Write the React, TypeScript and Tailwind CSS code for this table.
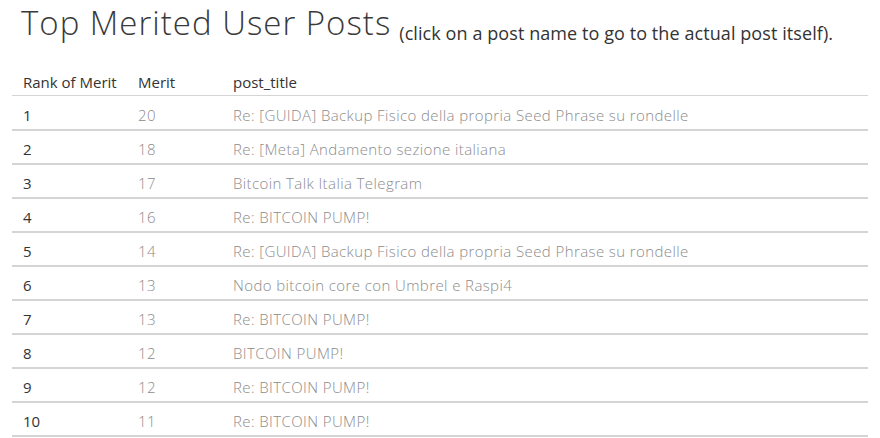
const rows = [
  { rank: 1, merit: 20, title: "Re: [GUIDA] Backup Fisico della propria Seed Phrase su rondelle" },
  { rank: 2, merit: 18, title: "Re: [Meta] Andamento sezione italiana" },
  { rank: 3, merit: 17, title: "Bitcoin Talk Italia Telegram" },
  { rank: 4, merit: 16, title: "Re: BITCOIN PUMP!" },
  { rank: 5, merit: 14, title: "Re: [GUIDA] Backup Fisico della propria Seed Phrase su rondelle" },
  { rank: 6, merit: 13, title: "Nodo bitcoin core con Umbrel e Raspi4" },
  { rank: 7, merit: 13, title: "Re: BITCOIN PUMP!" },
  { rank: 8, merit: 12, title: "BITCOIN PUMP!" },
  { rank: 9, merit: 12, title: "Re: BITCOIN PUMP!" },
  { rank: 10, merit: 11, title: "Re: BITCOIN PUMP!" },
];

export default function App() {
  return (
    <main className="h-[438px] w-[880px] bg-white font-['Open_Sans',sans-serif] text-[#333]">
      <header className="flex items-start gap-[8px] pl-[21px]">
        <h1 className="text-[33px] font-light leading-[45px] tracking-[1px] text-[#3a3a3a]">Top Merited User Posts</h1>
        <p className="mt-[21px] text-[18px] leading-[24px] tracking-[0.08px] text-[#333]">
          (click on a post name to go to the actual post itself).
        </p>
      </header>

      <table className="ml-[12px] mt-[26px] w-[856px] border-collapse text-[15px]">
        <thead>
          <tr className="border-b border-[#d4d4d4]">
            <th className="w-[115px] pb-[2px] pl-[11px] text-left font-medium leading-[22px]">Rank of Merit</th>
            <th className="w-[95px] pb-[2px] pl-[11px] text-left font-medium leading-[22px]">Merit</th>
            <th className="pb-[2px] pl-[11px] text-left font-medium leading-[22px]">post_title</th>
          </tr>
        </thead>
        <tbody>
          {rows.map((r) => (
            <tr key={r.rank} className="h-[34px] border-b-2 border-[#d4d4d4]">
              <td className="pl-[11px] pt-[5px] text-[#333]">{r.rank}</td>
              <td className="pl-[11px] pt-[5px] font-light tracking-[0.4px] text-[#8c8c8c]">{r.merit}</td>
              <td className="pl-[11px] pt-[5px] font-light tracking-[0.4px] text-[#8c8c8c]">{r.title}</td>
            </tr>
          ))}
        </tbody>
      </table>
    </main>
  );
}
